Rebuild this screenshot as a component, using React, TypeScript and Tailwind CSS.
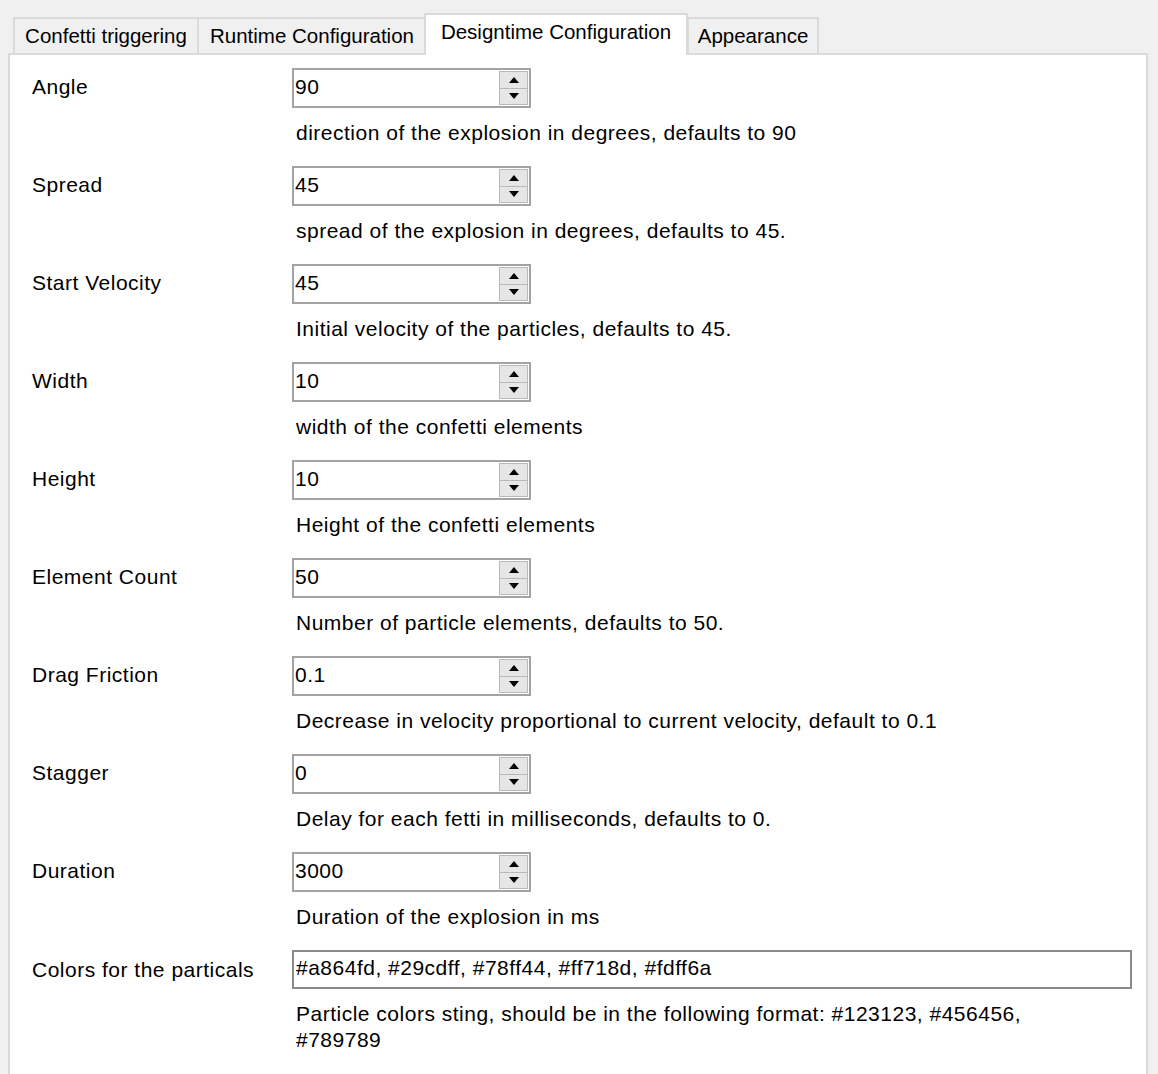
import React from "react";

const rows = [
  { label: "Angle", value: "90", desc: "direction of the explosion in degrees, defaults to 90" },
  { label: "Spread", value: "45", desc: "spread of the explosion in degrees, defaults to 45." },
  { label: "Start Velocity", value: "45", desc: "Initial velocity of the particles, defaults to 45." },
  { label: "Width", value: "10", desc: "width of the confetti elements" },
  { label: "Height", value: "10", desc: "Height of the confetti elements" },
  { label: "Element Count", value: "50", desc: "Number of particle elements, defaults to 50." },
  { label: "Drag Friction", value: "0.1", desc: "Decrease in velocity proportional to current velocity, default to 0.1" },
  { label: "Stagger", value: "0", desc: "Delay for each fetti in milliseconds, defaults to 0." },
  { label: "Duration", value: "3000", desc: "Duration of the explosion in ms" },
];

const tabs = [
  { name: "Confetti triggering", w: "w-[186px]" },
  { name: "Runtime Configuration", w: "w-[230px]" },
  { name: "Designtime Configuration", w: "w-[264px]", active: true },
  { name: "Appearance", w: "w-[132px]" },
];

const Arrow = ({ up }: { up?: boolean }) => (
  <svg width="10" height="6" viewBox="0 0 10 6">
    <polygon points={up ? "0,6 10,6 5,0" : "0,0 10,0 5,6"} fill="#000" />
  </svg>
);

const Spinner = ({ value }: { value: string }) => (
  <div className="flex w-[239px] h-[40px] border-2 border-[#a3a3a3] bg-white">
    <div className="flex-1 pl-[1px] pb-[3px] flex items-center leading-none">{value}</div>
    <div className="w-[30px] flex flex-col py-[1px] pr-[1px]">
      <div className="flex-1 flex items-center justify-center bg-[#e6e6e6] border border-[#b9b9b9]">
        <Arrow up />
      </div>
      <div className="flex-1 flex items-center justify-center bg-[#e6e6e6] border border-[#b9b9b9] border-t-0">
        <Arrow />
      </div>
    </div>
  </div>
);

const App = () => {
  return (
    <div className="w-[1158px] h-[1074px] overflow-hidden bg-[#f0f0f0] text-[21px] text-black font-['Liberation_Sans',Arial,sans-serif]">
      <div className="flex items-end h-[53px] pl-[13px] text-[20.5px]">
        {tabs.map((t) =>
          t.active ? (
            <div
              key={t.name}
              className={`${t.w} h-[42px] -mb-[2px] relative z-10 bg-white border-2 border-b-0 border-[#dadada] flex items-start justify-center pt-[2px] -mx-[1px]`}
            >
              {t.name}
            </div>
          ) : (
            <div
              key={t.name}
              className={`${t.w} h-[36px] bg-[#f0f0f0] border-2 border-b-0 border-[#dadada] flex items-center justify-center -mr-[2px]`}
            >
              {t.name}
            </div>
          )
        )}
      </div>
      <div className="ml-[8px] w-[1140px] h-[1030px] bg-white border-2 border-b-0 border-[#dadada] pl-[22px] pt-[13px] tracking-[0.5px]">
        {rows.map((r) => (
          <div key={r.label} className="grid grid-cols-[260px_1fr] h-[98px]">
            <div className="h-[40px] pb-[2px] flex items-center">{r.label}</div>
            <div>
              <Spinner value={r.value} />
              <div className="mt-[13px] pl-[4px] leading-[24px]">{r.desc}</div>
            </div>
          </div>
        ))}
        <div className="grid grid-cols-[260px_1fr]">
          <div className="h-[39px] flex items-center">Colors for the particals</div>
          <div>
            <div className="w-[840px] h-[39px] border-2 border-[#8a8a8a] flex items-center pl-[2px] pb-[3px]">
              #a864fd, #29cdff, #78ff44, #ff718d, #fdff6a
            </div>
            <div className="mt-[12px] pl-[4px] leading-[26px]">
              Particle colors sting, should be in the following format: #123123, #456456,
              <br />
              #789789
            </div>
          </div>
        </div>
      </div>
    </div>
  );
};

export default App;
